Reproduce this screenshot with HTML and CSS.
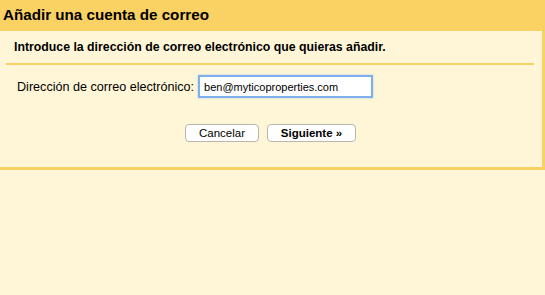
FILE: index.html
```html
<!DOCTYPE html>
<html lang="es">
<head>
    <meta charset="UTF-8">
    <title>Añadir una cuenta de correo</title>
    <link rel="stylesheet" href="styles.css">
</head>
<body>
    <h1 class="title">Añadir una cuenta de correo</h1>

    <div class="panel">
        <p class="intro">Introduce la dirección de correo electrónico que quieras añadir.</p>

        <div class="field">
            <label for="email">Dirección de correo electrónico:</label>
            <input type="text" id="email" value="ben@myticoproperties.com">
        </div>

        <div class="actions">
            <button type="button">Cancelar</button>
            <button type="button" class="primary">Siguiente »</button>
        </div>
    </div>
</body>
</html>
```

FILE: styles.css
```css
body {
    font-family: "Liberation Sans", Arial, sans-serif;
    background-color: #fff6d7;
    margin: 0;
    padding: 0;
}

.title {
    margin: 0;
    height: 31px;
    padding: 6px 0 0 3px;
    box-sizing: border-box;
    background-color: #fad163;
    font-size: 15.2px;
    color: #000;
}

.panel {
    background-color: #fff6d7;
    border-right: 3px solid #fad163;
    border-bottom: 3px solid #fad163;
    height: 136px;
    padding: 0 8px 0 6px;
}

.intro {
    margin: 0;
    padding: 9px 0 9px 8px;
    border-bottom: 2px solid #fad163;
    font-size: 12.3px;
    font-weight: bold;
}

.field {
    display: flex;
    align-items: center;
    padding: 10px 0 0 11px;
    font-size: 12.6px;
}

.field label {
    margin-right: 4px;
}

.field input {
    width: 163px;
    height: 19px;
    padding: 0 4px;
    border: 2px solid #7fb0ec;
    box-shadow: 0 0 2px #a9cdf5;
    outline: none;
    font-family: "Liberation Sans", Arial, sans-serif;
    font-size: 11px;
}

.actions {
    display: flex;
    gap: 8px;
    padding: 26px 0 0 179px;
}

.actions button {
    width: 74px;
    height: 18px;
    padding: 0;
    background-color: #fff;
    border: 1px solid #b8b6ad;
    border-radius: 4px;
    font-family: "Liberation Sans", Arial, sans-serif;
    font-size: 11.5px;
    color: #000;
}

.actions .primary {
    width: 89px;
    font-weight: bold;
}
```
